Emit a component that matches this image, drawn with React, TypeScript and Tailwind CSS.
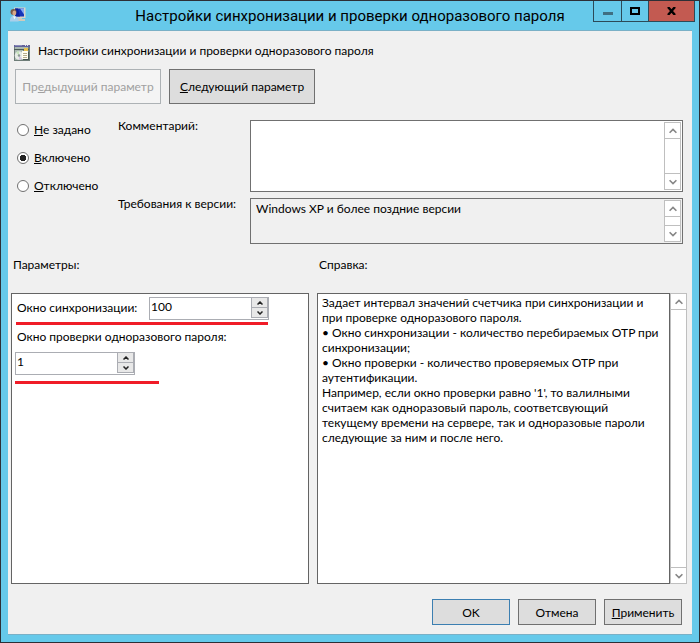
import { useState } from "react";

function Chevron({ up = false }: { up?: boolean }) {
  return (
    <svg width="8" height="6" viewBox="0 0 8 6" fill="none" stroke="currentColor" strokeWidth="1.6" aria-hidden="true">
      <path d={up ? "M0.6 4.8 4 1.4 7.4 4.8" : "M0.6 1.2 4 4.6 7.4 1.2"} />
    </svg>
  );
}

function ScrollBar({ label }: { label: string }) {
  return (
    <div className="flex w-[17px] shrink-0 flex-col justify-between border border-[#bfbfbf] bg-white text-[#868686]">
      <button type="button" aria-label={`${label}: вверх`} className="flex h-4 items-center justify-center border-b border-[#bfbfbf]">
        <Chevron up />
      </button>
      <button type="button" aria-label={`${label}: вниз`} className="flex h-4 items-center justify-center border-t border-[#bfbfbf]">
        <Chevron />
      </button>
    </div>
  );
}

function SpinBox({ id, initial }: { id: string; initial: number }) {
  const [value, setValue] = useState(initial);
  return (
    <div className="flex h-[23px] w-[120px] border border-[#abadb3] bg-white">
      <input
        id={id}
        type="text"
        inputMode="numeric"
        value={value}
        onChange={(e) => setValue(Number(e.target.value) || 0)}
        className="h-4 w-0 min-w-0 flex-1 pl-px outline-none"
      />
      <div className="flex h-5 w-[17px] flex-col text-[#222]">
        <button type="button" aria-label="Увеличить" onClick={() => setValue(value + 1)} className="flex h-[10px] items-center justify-center border border-t-0 border-[#abadb3] bg-[#e8e8e8]">
          <svg width="6" height="4" viewBox="0 0 6 4" fill="none" stroke="currentColor" strokeWidth="1.5" aria-hidden="true">
            <path d="M0.5 3.5 3 1 5.5 3.5" />
          </svg>
        </button>
        <button type="button" aria-label="Уменьшить" onClick={() => setValue(value - 1)} className="flex h-[10px] items-center justify-center border border-t-0 border-[#abadb3] bg-[#e8e8e8]">
          <svg width="6" height="4" viewBox="0 0 6 4" fill="none" stroke="currentColor" strokeWidth="1.5" aria-hidden="true">
            <path d="M0.5 0.5 3 3 5.5 0.5" />
          </svg>
        </button>
      </div>
    </div>
  );
}

function UserMonitorIcon() {
  return (
    <svg width="16" height="16" viewBox="0 0 16 16" aria-hidden="true">
      <path d="M4 0.5h11.500v10.500H4z" fill="#d9d5c8" />
      <path d="M5 1.500h9v8H5z" fill="#1736b8" />
      <path d="M10 1.500h4v6z" fill="#86aaf4" />
      <path d="M5 1.500h3l2 8H5z" fill="#0a1f9c" />
      <path d="M8 11h4v1h3v2H8z" fill="#cfcabb" />
      <circle cx="3.500" cy="5" r="3" fill="#7a5a48" />
      <ellipse cx="4.300" cy="6" rx="1.900" ry="2.500" fill="#d8a888" />
      <path d="M0 14.500c0-4 1.200-5.500 3.700-5.500s5 1.500 5 5.500z" fill="#a9cfea" />
      <path d="M3 9.200 4.500 12.500l1.500-3z" fill="#eef7fc" />
    </svg>
  );
}

function PolicyIcon() {
  return (
    <svg width="16" height="16" viewBox="0 0 16 16" aria-hidden="true">
      <path d="M0 0h16v16H0z" fill="#6e7d78" />
      <path d="M0 0h16v2H0z" fill="#62629a" />
      <path d="M1 0h7v1H1z" fill="#8a8ab8" />
      <path d="M11 0h1v1h-1zM13 0h1v1h-1z" fill="#e4e4f2" />
      <path d="M1 2h13v2H1z" fill="#a9b8b1" />
      <path d="M0 4h15v1H0z" fill="#4d5c58" />
      <path d="M10 3h4v3h-4z" fill="#e8c04c" />
      <path d="M1 5h8v10H1z" fill="#a9b8b1" />
      <circle cx="5" cy="10.500" r="4.300" fill="#e6ebe5" />
      <path d="M5 10.500 2 7.500A4.300 4.300 0 0 1 5 6.200z" fill="#c6e4bc" />
      <path d="M5 10.500 8 13.500A4.300 4.300 0 0 1 5 14.800z" fill="#d4c5e2" />
      <circle cx="5" cy="10.500" r="1.200" fill="#8a9a93" />
      <path d="M8 6h6v8H8z" fill="#fffdf0" />
      <path d="M9 8h4v1H9zM9 10h4v1H9zM9 12h4v1H9z" fill="#b5ad8c" />
      <path d="M14 7h1v8H9v-1h5z" fill="#485652" />
    </svg>
  );
}

const states = [
  { id: "unset", key: "Н", rest: "е задано" },
  { id: "on", key: "В", rest: "ключено" },
  { id: "off", key: "О", rest: "тключено" },
];

const help = [
  "Задает интервал значений счетчика при синхронизации и при проверке одноразового пароля.",
  "• Окно синхронизации - количество перебираемых OTP при синхронизации;",
  "• Окно проверки - количество проверяемых OTP при аутентификации.",
  "Например, если окно проверки равно '1', то валилными считаем как одноразовый пароль, соответсвующий текущему времени на сервере, так и одноразовые пароли следующие за ним и после него.",
];

export default function App() {
  const [state, setState] = useState("on");
  return (
    <div className="flex min-h-screen flex-col border border-[#2d2f36] bg-[#66c9ea] px-[7px] pb-[7px] font-['Lato','Noto_Sans',sans-serif] text-[12px] leading-[15px] text-black">
      <header className="grid h-[29px] grid-cols-[1fr_auto_1fr] items-start">
        <div className="pt-1.5 pl-0.5">
          <UserMonitorIcon />
        </div>
        <h1 className="pt-[5px] font-['Roboto','Noto_Sans',sans-serif] text-[15px] leading-5">Настройки синхронизации и проверки одноразового пароля</h1>
        <div className="-mr-[3px] flex h-[21px] justify-self-end border-x border-b border-[#2c4a58]">
          <button type="button" aria-label="Свернуть" className="flex w-[27px] items-center justify-center">
            <span className="mt-1 h-[3px] w-[10px] bg-[#3f6f82]" />
          </button>
          <button type="button" aria-label="Развернуть" className="flex w-[27px] items-center justify-center border-l border-[#2c4a58]">
            <span className="h-2 w-[10px] border-2 border-black" />
          </button>
          <button type="button" aria-label="Закрыть" className="flex w-[46px] items-center justify-center border-l border-[#2c4a58] bg-[#c35a51]">
            <svg width="9" height="8" viewBox="0 0 9 8" stroke="black" strokeWidth="2.400" aria-hidden="true">
              <path d="M1 0 8 8M8 0 1 8" />
            </svg>
          </button>
        </div>
      </header>

      <main className="flex flex-1 flex-col border-y border-[#7ab0c6] bg-[#f0f0f0] pb-[9px]">
        <div className="flex items-start gap-2 pt-3 pl-1.5">
          <div className="pt-0.5">
            <PolicyIcon />
          </div>
          <p>Настройки синхронизации и проверки одноразового пароля</p>
        </div>
        <div className="mt-2 flex gap-2 pl-[7px]">
          <button type="button" disabled className="h-[35px] w-[146px] border border-[#adb2b5] bg-[#f4f4f4] text-[#a0a0a0]">
            Пр<u>е</u>дыдущий параметр
          </button>
          <button type="button" className="h-[35px] w-[146px] border border-[#707070] bg-[#dddddd]">
            <u>С</u>ледующий параметр
          </button>
        </div>

        <div className="mt-3.5 flex pr-[9px] pl-[9px]">
          <fieldset className="flex w-[101px] flex-col gap-[13px] pt-1">
            {states.map((s) => (
              <label key={s.id} className="flex items-center gap-[5px]">
                <input
                  type="radio"
                  name="state"
                  checked={state === s.id}
                  onChange={() => setState(s.id)}
                  className="size-3 appearance-none rounded-full border border-[#707070] bg-white checked:bg-[radial-gradient(circle,#222_3px,white_3px)]"
                />
                <span>
                  <u>{s.key}</u>
                  {s.rest}
                </span>
              </label>
            ))}
          </fieldset>
          <div className="grid flex-1 grid-cols-[132px_1fr] gap-y-1">
            <label htmlFor="comment">Комментарий:</label>
            <div className="mt-0.5 flex h-[72px] border border-[#707070] bg-white p-px">
              <textarea id="comment" className="min-w-0 flex-1 resize-none outline-none" />
              <ScrollBar label="Комментарий" />
            </div>
            <label htmlFor="version">Требования к версии:</label>
            <div className="mt-0.5 flex h-[46px] border border-[#707070] p-px">
              <textarea id="version" readOnly defaultValue="Windows XP и более поздние версии" className="min-w-0 flex-1 resize-none pt-px pl-1 outline-none" />
              <ScrollBar label="Требования" />
            </div>
          </div>
        </div>

        <div className="mt-[13px] grid flex-1 grid-cols-[298fr_370fr] grid-rows-[15px_1fr] gap-x-2 gap-y-[21px] pr-[5px] pl-[3px]">
          <h2 className="pl-0.5">Параметры:</h2>
          <h2 className="pl-0.5">Справка:</h2>
          <section className="border border-[#646464] bg-white pt-[3px] pl-[3px]">
            <div className="flex w-[254px] justify-between">
              <label htmlFor="sync" className="pt-[3px] pl-0.5">Окно синхронизации:</label>
              <SpinBox id="sync" initial={100} />
            </div>
            <div className="mt-0.5 ml-px h-[3px] w-[252px] bg-[#f01c28]" />
            <label htmlFor="check" className="mt-1 mb-2 block pl-0.5">Окно проверки одноразового пароля:</label>
            <SpinBox id="check" initial={1} />
            <div className="mt-1.5 h-[3px] w-36 bg-[#f01c28]" />
          </section>
          <section className="flex">
            <div className="flex-1 border border-[#646464] bg-white px-1 pt-px">
              {help.map((line) => (
                <p key={line}>{line}</p>
              ))}
            </div>
            <ScrollBar label="Справка" />
          </section>
        </div>

        <footer className="mt-[15px] flex justify-end gap-2 pr-2.5">
          <button type="button" className="h-[26px] w-[78px] border border-[#3c7fb1] bg-[#dddddd]">OK</button>
          <button type="button" className="h-[26px] w-[78px] border border-[#707070] bg-[#dddddd]">Отмена</button>
          <button type="button" className="h-[26px] w-[78px] border border-[#707070] bg-[#dddddd]">
            <u>П</u>рименить
          </button>
        </footer>
      </main>
    </div>
  );
}
